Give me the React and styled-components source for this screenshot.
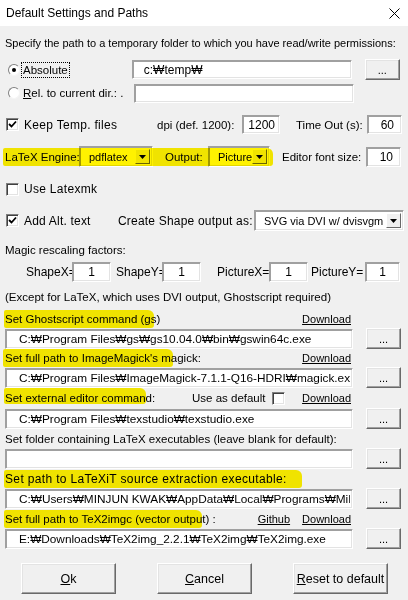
import React from 'react'
import styled, { createGlobalStyle } from 'styled-components'

const FONT = `"Liberation Sans", "Noto Sans CJK KR", Arial, sans-serif`
const W = '\u20A9'

const GlobalStyle = createGlobalStyle`
  html, body {
    margin: 0;
    padding: 0;
    background: #f0f0f0;
  }
`

const Window = styled.div`
  width: 408px;
  height: 600px;
  background: #f0f0f0;
  font-family: ${FONT};
  color: #000;
  display: flex;
  flex-direction: column;
  overflow: hidden;
`

const TitleBar = styled.div`
  height: 26px;
  background: #fff;
  display: flex;
  align-items: center;
  justify-content: space-between;
  padding: 0 8px 0 6px;
  font-size: 12px;
`

const Body = styled.div`
  display: flex;
  flex-direction: column;
`

const Row = styled.div`
  position: relative;
  display: flex;
  align-items: center;
  height: ${p => p.h || 14}px;
  margin-top: ${p => p.mt || 0}px;
  padding-left: ${p => p.pl || 0}px;
  ${p => p.w ? `width: ${p.w}px;` : ''}
`

const Label = styled.span`
  font-size: ${p => p.size || 11}px;
  white-space: nowrap;
  margin-left: ${p => p.ml || 0}px;
  ${p => p.w ? `width: ${p.w}px; flex: none;` : ''}
  letter-spacing: ${p => p.ls || 0}px;
`

const Focus = styled(Label)`
  outline: 1px dotted #000;
  outline-offset: 0;
  padding: 1px 1px;
`

const Link = styled.span`
  font-size: 11px;
  text-decoration: underline;
  margin-left: ${p => p.ml || 0}px;
  white-space: nowrap;
`

const Marker = styled.div`
  position: absolute;
  left: ${p => p.x}px;
  width: ${p => p.w}px;
  top: ${p => p.t || -1}px;
  bottom: ${p => p.b || -1}px;
  background: #fff200;
  mix-blend-mode: multiply;
  border-radius: 2px 6px 3px 2px;
  pointer-events: none;
  z-index: 2;
`

const TextBox = styled.div`
  box-sizing: border-box;
  flex: none;
  width: ${p => p.w}px;
  height: ${p => p.h || 20}px;
  margin-left: ${p => p.ml || 0}px;
  background: #fff;
  border: 1px solid;
  border-color: #a0a0a0 #fff #fff #a0a0a0;
  box-shadow: inset 1px 1px 0 #a0a0a0, inset -1px -1px 0 #e3e3e3;
  display: flex;
  align-items: center;
  justify-content: ${p => p.align === 'right' ? 'flex-end' : p.align === 'center' ? 'center' : 'flex-start'};
  padding: 0 ${p => p.pr || 0}px 0 ${p => p.pl || 0}px;
  font-size: ${p => p.size || 12}px;
  white-space: nowrap;
  overflow: hidden;
`

const BoxText = styled.span`
  display: block;
  max-width: 100%;
  overflow: hidden;
  white-space: nowrap;
`

const RaisedButton = styled.button`
  box-sizing: border-box;
  flex: none;
  width: ${p => p.w || 35}px;
  height: ${p => p.h || 21}px;
  margin-left: ${p => p.ml || 0}px;
  background: #f0f0f0;
  border: 1px solid;
  border-color: #fff #696969 #696969 #fff;
  box-shadow: inset -1px -1px 0 #a0a0a0, inset 1px 1px 0 #e3e3e3;
  font-family: ${FONT};
  font-size: ${p => p.size || 11}px;
  color: #000;
  padding: 0;
  u { text-decoration: underline; }
`

const Combo = styled.div`
  box-sizing: border-box;
  flex: none;
  width: ${p => p.w}px;
  height: ${p => p.h || 21}px;
  margin-left: ${p => p.ml || 0}px;
  background: #fff;
  border: 1px solid;
  border-color: #a0a0a0 #fff #fff #a0a0a0;
  box-shadow: inset 1px 1px 0 #a0a0a0, inset -1px -1px 0 #e3e3e3;
  display: flex;
  align-items: stretch;
  padding: 2px;
  font-size: 11px;
`

const ComboText = styled.div`
  flex: 1;
  min-width: 0;
  display: flex;
  align-items: center;
  padding-left: 7px;
  white-space: nowrap;
`

const ComboArrow = styled.div`
  box-sizing: border-box;
  flex: none;
  width: 15px;
  background: #f0f0f0;
  border: 1px solid;
  border-color: #fff #696969 #696969 #fff;
  display: flex;
  align-items: center;
  justify-content: center;
`

const BoxMark = styled.div`
  box-sizing: border-box;
  flex: none;
  width: 13px;
  height: 13px;
  margin-left: ${p => p.ml || 0}px;
  background: #fff;
  border: 1px solid;
  border-color: #808080 #fff #fff #808080;
  box-shadow: inset 1px 1px 0 #404040, inset -1px -1px 0 #e3e3e3;
  display: flex;
  align-items: center;
  justify-content: center;
`

const RadioMark = styled.div`
  box-sizing: border-box;
  flex: none;
  width: 12px;
  height: 12px;
  margin-left: ${p => p.ml || 0}px;
  border-radius: 50%;
  background: #fff;
  border: 1px solid;
  border-color: #808080 #f4f4f4 #f4f4f4 #808080;
  display: flex;
  align-items: center;
  justify-content: center;
  &::after {
    content: '';
    width: 4px;
    height: 4px;
    border-radius: 50%;
    background: ${p => p.on ? '#000' : 'transparent'};
  }
`

const Spacer = styled.div`
  flex: 1;
`

const FileRow = styled(Row)`
  padding-left: 5px;
`

function Check({ on, ml }) {
  return (
    <BoxMark ml={ml}>
      {on && (
        <svg width="9" height="9" viewBox="0 0 9 9">
          <path d="M1 4 L3.5 6.5 L8 1.5" stroke="#000" strokeWidth="1.8" fill="none" />
        </svg>
      )}
    </BoxMark>
  )
}

function Dropdown({ w, children, ml, h }) {
  return (
    <Combo w={w} ml={ml} h={h}>
      <ComboText>{children}</ComboText>
      <ComboArrow>
        <svg width="7" height="4" viewBox="0 0 7 4">
          <path d="M0 0 H7 L3.5 4 Z" fill="#000" />
        </svg>
      </ComboArrow>
    </Combo>
  )
}

function PathRow({ mt, value }) {
  return (
    <FileRow h={21} mt={mt}>
      <TextBox w={348} pl={13} pr={2} size={11.8}>
        <BoxText>{value}</BoxText>
      </TextBox>
      <RaisedButton ml={13}>...</RaisedButton>
    </FileRow>
  )
}

export default function App() {
  return (
    <Window>
      <GlobalStyle />
      <TitleBar>
        <span>Default Settings and Paths</span>
        <svg width="11" height="11" viewBox="0 0 11 11">
          <path d="M0.5 0.5 L10.5 10.5 M10.5 0.5 L0.5 10.5" stroke="#000" strokeWidth="1" />
        </svg>
      </TitleBar>
      <Body>
        <Row h={14} mt={10} pl={5}>
          <Label>Specify the path to a temporary folder to which you have read/write permissions:</Label>
        </Row>

        <Row h={21} mt={9}>
          <RadioMark ml={8} on />
          <Focus ml={2} size={11.5}>Absolute</Focus>
          <TextBox w={220} ml={63} h={19} pl={11}>c:{W}temp{W}</TextBox>
          <RaisedButton ml={13} h={21}>...</RaisedButton>
        </Row>
        <Row h={20} mt={3}>
          <RadioMark ml={8} />
          <Label ml={3} w={111} size={11.5}><u>R</u>el. to current dir.: .</Label>
          <TextBox w={220} h={19} />
        </Row>

        <Row h={19} mt={12}>
          <Check ml={6} on />
          <Label ml={5} w={128} size={12} ls={0.3}>Keep Temp. files</Label>
          <Label ml={5} w={85} size={11.5}>dpi (def. 1200):</Label>
          <TextBox w={38} h={19} align="right" pr={4}>1200</TextBox>
          <Label ml={16} w={71} size={11.5}>Time Out (s):</Label>
          <TextBox w={35} h={19} align="right" pr={7}>60</TextBox>
        </Row>

        <Row h={21} mt={12}>
          <Marker x={3} w={270} t={2} b={1} />
          <Label ml={5} w={74} size={11.5}>LaTeX Engine:</Label>
          <Dropdown w={74}>pdflatex</Dropdown>
          <Label ml={12} w={43} size={11.5}>Output:</Label>
          <Dropdown w={62}>Picture</Dropdown>
          <Label ml={12} w={84} size={11.5}>Editor font size:</Label>
          <TextBox w={35} h={20} align="right" pr={7}>10</TextBox>
        </Row>

        <Row h={14} mt={15}>
          <Check ml={6} />
          <Label ml={5} size={12} ls={0.3}>Use Latexmk</Label>
        </Row>

        <Row h={21} mt={14}>
          <Check ml={6} on />
          <Label ml={5} w={94} size={12} ls={0.2}>Add Alt. text</Label>
          <Label w={136} size={12} ls={0.2}>Create Shape output as:</Label>
          <Dropdown w={150}>SVG via DVI w/ dvisvgm</Dropdown>
        </Row>

        <Row h={14} mt={12} pl={5}>
          <Label size={11.5}>Magic rescaling factors:</Label>
        </Row>

        <Row h={20} mt={5}>
          <Label ml={26} w={46} size={12}>ShapeX=</Label>
          <TextBox w={39} h={20} align="center">1</TextBox>
          <Label ml={5} w={46} size={12}>ShapeY=</Label>
          <TextBox w={39} h={20} align="center">1</TextBox>
          <Label ml={16} w={52} size={12}>PictureX=</Label>
          <TextBox w={39} h={20} align="center">1</TextBox>
          <Label ml={3} w={54} size={12}>PictureY=</Label>
          <TextBox w={35} h={20} align="center">1</TextBox>
        </Row>

        <Row h={14} mt={8} pl={5}>
          <Label size={11.5}>(Except for LaTeX, which uses DVI output, Ghostscript required)</Label>
        </Row>

        <Row h={14} mt={8} pl={5} w={346}>
          <Marker x={4} w={150} t={-2} b={-2} />
          <Label size={11.5}>Set Ghostscript command (gs)</Label>
          <Spacer />
          <Link>Download</Link>
        </Row>
        <PathRow mt={2} value={`C:${W}Program Files${W}gs${W}gs10.04.0${W}bin${W}gswin64c.exe`} />

        <Row h={14} mt={2} pl={5} w={346}>
          <Marker x={3} w={170} t={-2} b={-2} />
          <Label size={11.5}>Set full path to ImageMagick's magick:</Label>
          <Spacer />
          <Link>Download</Link>
        </Row>
        <PathRow mt={2} value={`C:${W}Program Files${W}ImageMagick-7.1.1-Q16-HDRI${W}magick.exe`} />

        <Row h={14} mt={3} pl={5} w={346}>
          <Marker x={4} w={142} t={-3} b={1} />
          <Label w={187} size={11.5}>Set external editor command:</Label>
          <Label w={80} size={11.5}>Use as default</Label>
          <Check />
          <Spacer />
          <Link>Download</Link>
        </Row>
        <PathRow mt={3} value={`C:${W}Program Files${W}texstudio${W}texstudio.exe`} />

        <Row h={14} mt={3} pl={5}>
          <Label size={11.5}>Set folder containing LaTeX executables (leave blank for default):</Label>
        </Row>
        <PathRow mt={2} value="" />

        <Row h={16} mt={2} pl={5}>
          <Marker x={4} w={298} t={-1} b={-1} />
          <Label size={12} ls={0.35}>Set path to LaTeXiT source extraction executable:</Label>
        </Row>
        <PathRow mt={1} value={`C:${W}Users${W}MINJUN KWAK${W}AppData${W}Local${W}Programs${W}MiKTeX${W}m`} />

        <Row h={14} mt={3} pl={5} w={346}>
          <Marker x={4} w={198} t={-2} b={-2} />
          <Label size={11.5}>Set full path to TeX2imgc (vector output) :</Label>
          <Spacer />
          <Link>Github</Link>
          <Link ml={12}>Download</Link>
        </Row>
        <PathRow mt={2} value={`E:${W}Downloads${W}TeX2img_2.2.1${W}TeX2img${W}TeX2img.exe`} />

        <Row h={31} mt={14}>
          <RaisedButton ml={21} w={95} h={31} size={12.5}><u>O</u>k</RaisedButton>
          <RaisedButton ml={41} w={95} h={31} size={12.5}><u>C</u>ancel</RaisedButton>
          <RaisedButton ml={41} w={95} h={31} size={12.5}><u>R</u>eset to default</RaisedButton>
        </Row>
      </Body>
    </Window>
  )
}
